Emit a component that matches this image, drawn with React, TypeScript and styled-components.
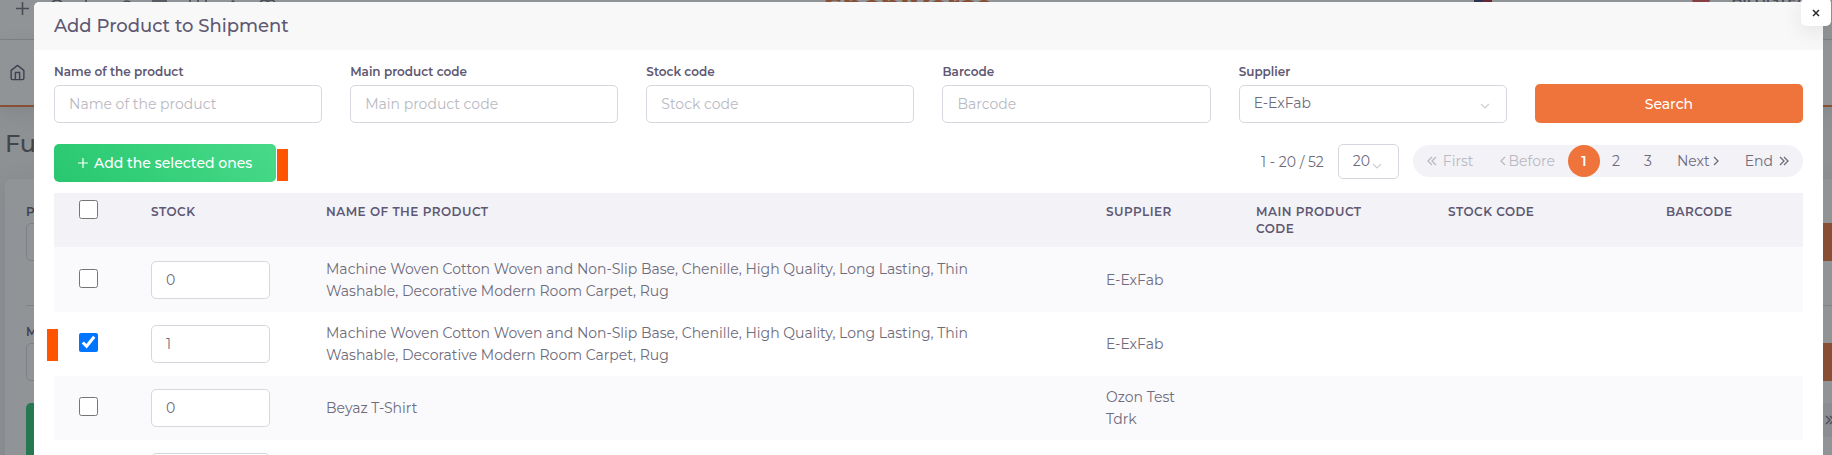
import React from "react";
import styled, { createGlobalStyle } from "styled-components";

const ink = "#5e5873";
const body = "#6e6b7b";
const muted = "#b9b9c3";
const line = "#d8d6de";
const orange = "#ee743b";

const GlobalStyle = createGlobalStyle`
  *, *::before, *::after { box-sizing: border-box; }
  body {
    margin: 0;
    background: #f8f8f8;
    color: ${body};
    font: 400 14px/22px Montserrat, Inter, sans-serif;
  }
  button, input, select { font: inherit; color: inherit; }
`;

/* ---------- page behind the dialog ---------- */

const Page = styled.div`
  height: 100vh;
  overflow: hidden;
`;

const TopBar = styled.header`
  display: flex;
  justify-content: space-between;
  align-items: flex-start;
  height: 40px;
  background: #fff;
  border-bottom: 1px solid #dcdcdc;
  overflow: hidden;
`;

const Brand = styled.span`
  margin: -8px 0 0 54px;
  font-size: 28px;
  line-height: 28px;
  font-weight: 800;
  color: ${orange};
`;

const UserArea = styled.div`
  display: flex;
  align-items: flex-start;
  padding-right: 24px;
`;

const Flag = styled.span`
  width: 18px;
  height: 2px;
  margin-right: 200px;
  background: linear-gradient(90deg, #3c3b6e 50%, #b22234 50%);
`;

const Badge = styled.span`
  width: 18px;
  height: 14px;
  margin: -8px 22px 0 0;
  border-radius: 0 0 7px 7px;
  background: #ea5455;
`;

const UserName = styled.span`
  margin-top: -8px;
  font-size: 14px;
  line-height: 16px;
  font-weight: 600;
`;

const MenuBar = styled.nav`
  display: flex;
  align-items: center;
  height: 67px;
  padding: 0 9px;
  background: #fff;
  border-bottom: 2px solid ${orange};
  box-shadow: 0 4px 20px rgba(0, 0, 0, 0.1);
`;

const PageTitle = styled.h1`
  margin: 22px 0 20px 5px;
  font-size: 24px;
  line-height: 30px;
  font-weight: 500;
  color: #636363;
`;

const Card = styled.section`
  height: 400px;
  margin: 0 -20px 0 5px;
  padding: 21px 0 0 21px;
  border-radius: 6px;
  background: #fff;
  box-shadow: 0 4px 24px rgba(34, 41, 47, 0.1);
`;

const CardRow = styled.div<{ $divided?: boolean }>`
  display: flex;
  align-items: flex-end;
  justify-content: space-between;
  height: ${(p) => (p.$divided ? "106px" : "61px")};
  padding-bottom: ${(p) => (p.$divided ? "44px" : "0")};
  margin-bottom: ${(p) => (p.$divided ? "14px" : "22px")};
  border-bottom: ${(p) => (p.$divided ? "1px solid #dcdce2" : "0")};
  font-size: 12px;
  font-weight: 600;
  color: ${ink};
`;

const Stub = styled.div`
  width: 200px;
  height: 38px;
  border: 1px solid ${line};
  border-radius: 5px;
`;

const StubButton = styled.div<{ $green?: boolean }>`
  width: ${(p) => (p.$green ? "200px" : "100px")};
  height: ${(p) => (p.$green ? "60px" : "38px")};
  border-radius: 5px;
  background: ${(p) => (p.$green ? "#28c76f" : orange)};
`;

const CardField = styled.div`
  line-height: 22px;
`;

const CardFooter = styled.div`
  display: flex;
  justify-content: space-between;
  color: ${body};
`;

const FooterPill = styled.div`
  display: flex;
  align-items: center;
  height: 34px;
  padding: 0 14px;
  margin-right: 3px;
  border-radius: 16px;
  background: #f3f2f7;
`;

/* ---------- dialog ---------- */

const Overlay = styled.div`
  position: fixed;
  inset: 0;
  overflow: hidden;
  background: rgba(34, 41, 47, 0.5);
`;

const Dialog = styled.div`
  position: relative;
  margin: 2px 9px 0 34px;
  border-radius: 6px 6px 0 0;
  background: #fff;
`;

const DialogHeader = styled.header`
  padding: 10px 20px;
  border-radius: 5px 5px 0 0;
  background: #f8f8f8;
`;

const DialogTitle = styled.h2`
  margin: 0;
  font-size: 18px;
  line-height: 28px;
  font-weight: 500;
  color: ${ink};
`;

const CloseButton = styled.button`
  position: absolute;
  top: -4px;
  right: -8px;
  display: grid;
  place-items: center;
  width: 30px;
  height: 28px;
  padding: 2px 0 0;
  border: 0;
  border-radius: 5px;
  background: #fff;
  box-shadow: 0 5px 20px rgba(34, 41, 47, 0.1);
`;

const DialogBody = styled.div`
  padding: 13px 20px;
`;

const Filters = styled.form`
  display: grid;
  grid-template-columns: repeat(6, 1fr);
  align-items: end;
  gap: 28px;
`;

const Field = styled.div`
  display: flex;
  flex-direction: column;
  gap: 4px;
`;

const Label = styled.label`
  font-size: 12px;
  line-height: 18px;
  font-weight: 600;
  color: ${ink};
`;

const TextInput = styled.input`
  width: 100%;
  height: 38px;
  padding: 0 14px;
  border: 1px solid ${line};
  border-radius: 5px;
  background: #fff;
  outline: 0;
  &::placeholder { color: ${muted}; opacity: 1; }
`;

const SelectBox = styled.div<{ $compact?: boolean }>`
  position: relative;
  width: ${(p) => (p.$compact ? "61px" : "100%")};
  svg {
    position: absolute;
    right: ${(p) => (p.$compact ? "17px" : "17px")};
    bottom: ${(p) => (p.$compact ? "10px" : "14px")};
    pointer-events: none;
  }
`;

const Select = styled.select<{ $compact?: boolean }>`
  display: block;
  appearance: none;
  width: 100%;
  height: ${(p) => (p.$compact ? "35px" : "38px")};
  padding: 0 14px 2px;
  border: 1px solid ${line};
  border-radius: 5px;
  background: #fff;
  outline: 0;
`;

const SearchButton = styled.button`
  height: 39px;
  border: 0;
  border-radius: 5px;
  background: ${orange};
  color: #fff;
  font-weight: 500;
`;

const Toolbar = styled.div`
  display: flex;
  align-items: flex-start;
  justify-content: space-between;
  margin: 21px 0 11px;
`;

const Actions = styled.div`
  display: flex;
  align-items: flex-end;
  gap: 1px;
`;

const AddButton = styled.button`
  display: flex;
  align-items: center;
  gap: 6px;
  height: 38px;
  padding: 0 24px;
  border: 0;
  border-radius: 5px;
  background: linear-gradient(47deg, #28c76f, #48da89);
  color: #fff;
  font-weight: 500;
`;

const Marker = styled.span`
  width: 11px;
  height: 32px;
  margin-bottom: 1px;
  background: #ff5500;
`;

const RowMarker = styled(Marker)`
  position: absolute;
  top: 17px;
  left: -7px;
`;

const Paging = styled.div`
  display: flex;
  align-items: center;
  gap: 14px;
`;

const Pages = styled.ul`
  display: flex;
  margin: 0 0 1px;
  padding: 0 1px;
  list-style: none;
  border-radius: 16px;
  background: #f3f2f7;
`;

const PageLink = styled.a<{ $state?: "active" | "disabled"; $wide?: boolean; $gap?: number }>`
  display: flex;
  align-items: center;
  justify-content: center;
  gap: ${(p) => p.$gap ?? 0}px;
  min-width: 32px;
  height: 32px;
  padding: 0 ${(p) => (p.$wide ? 13 : 0)}px;
  border-radius: 16px;
  text-decoration: none;
  color: ${(p) => (p.$state === "active" ? "#fff" : p.$state === "disabled" ? muted : body)};
  background: ${(p) => (p.$state === "active" ? orange : "transparent")};
  font-weight: ${(p) => (p.$state === "active" ? 600 : 400)};
`;

const Table = styled.table`
  width: 100%;
  table-layout: fixed;
  border-collapse: collapse;
`;

const Col = styled.col<{ $w?: number }>`
  width: ${(p) => (p.$w ? `${p.$w}px` : "auto")};
`;

const HeadCell = styled.th<{ $check?: boolean }>`
  height: 54px;
  padding: ${(p) => (p.$check ? "7px 25px 0" : "10px 28px 9px")};
  text-align: left;
  vertical-align: top;
  background: #f3f2f7;
  color: ${ink};
  font-size: 12px;
  line-height: 17px;
  font-weight: 600;
  letter-spacing: 0.04em;
`;

const Cell = styled.td<{ $check?: boolean; $name?: boolean }>`
  position: relative;
  height: 64px;
  padding: ${(p) => (p.$check ? "0 25px 4px" : p.$name ? "0 84px 0 28px" : "0 28px")};
`;

const Row = styled.tr`
  &:nth-child(odd) { background: #fafafc; }
  &:first-child ${Cell} { height: 65px; padding-top: 1px; }
`;

const Check = styled.input`
  display: block;
  width: 19px;
  height: 19px;
  margin: 0;
`;

const Chevron = () => (
  <svg width="10" height="6" viewBox="0 0 10 6" fill="none" stroke="#cfcdd6" strokeWidth="1.2">
    <path d="M1 1l4 4 4-4" />
  </svg>
);

const Arrow = ({ dir, double }: { dir: "left" | "right"; double?: boolean }) => {
  const w = double ? 10 : 6;
  const left = dir === "left";
  const d = left ? "M5 1L1 5l4 4" : "M1 1l4 4-4 4";
  const d2 = left ? "M9 1L5 5l4 4" : "M5 1l4 4-4 4";
  return (
    <svg width={w} height="10" viewBox={`0 0 ${w} 10`} fill="none" stroke="currentColor" strokeWidth="1.3">
      <path d={d} />
      {double && <path d={d2} />}
    </svg>
  );
};

const TopIcons = () => (
  <svg width="290" height="18" viewBox="0 0 290 18" fill="none" stroke={body} strokeWidth="1.6">
    <path d="M22.500 2v13M16 8.500h13" />
    <circle cx="57" cy="6" r="6" />
    <path d="M86 0v4M190 0v6M198 0v6M206 0v6M230 4l3-3 3 3M152 1h15" />
    <circle cx="127" cy="6" r="5" />
    <circle cx="264" cy="4" r="4" />
    <circle cx="271" cy="4" r="4" />
  </svg>
);

const HomeIcon = () => (
  <svg width="17" height="17" viewBox="0 0 24 24" fill="none" stroke={ink} strokeWidth="2" strokeLinejoin="round">
    <path d="M3 9l9-7 9 7v11a2 2 0 0 1-2 2H5a2 2 0 0 1-2-2z" />
    <path d="M9 22V12h6v10" />
  </svg>
);

const textFilters = ["Name of the product", "Main product code", "Stock code", "Barcode"];
const rug =
  "Machine Woven Cotton Woven and Non-Slip Base, Chenille, High Quality, Long Lasting, Thin Washable, Decorative Modern Room Carpet, Rug";
const products = [
  { name: rug, supplier: "E-ExFab", stock: 0, checked: false },
  { name: rug, supplier: "E-ExFab", stock: 1, checked: true },
  { name: "Beyaz T-Shirt", supplier: "Ozon Test Tdrk", stock: 0, checked: false },
  { name: "", supplier: "", stock: 0, checked: false },
];

export default function App() {
  return (
    <>
      <GlobalStyle />
      <Page aria-hidden="true">
        <TopBar>
          <TopIcons />
          <Brand>ShopiVerse</Brand>
          <UserArea>
            <Flag />
            <Badge />
            <UserName>BILGISTEN</UserName>
          </UserArea>
        </TopBar>
        <MenuBar>
          <HomeIcon />
        </MenuBar>
        <PageTitle>Fu</PageTitle>
        <Card>
          <CardRow $divided>
            <CardField>P<Stub /></CardField>
            <StubButton />
          </CardRow>
          <CardRow>
            <CardField>M<Stub /></CardField>
            <StubButton />
          </CardRow>
          <CardFooter>
            <StubButton $green />
            <FooterPill><Arrow dir="right" double /></FooterPill>
          </CardFooter>
        </Card>
      </Page>

      <Overlay>
        <Dialog role="dialog" aria-labelledby="dialog-title">
          <DialogHeader>
            <DialogTitle id="dialog-title">Add Product to Shipment</DialogTitle>
            <CloseButton type="button" aria-label="Close">
              <svg width="8" height="8" viewBox="0 0 8 8" stroke="#2b2b2b" strokeWidth="1.5">
                <path d="M1 1l6 6M7 1L1 7" />
              </svg>
            </CloseButton>
          </DialogHeader>
          <DialogBody>
            <Filters onSubmit={(e) => e.preventDefault()}>
              {textFilters.map((name, i) => (
                <Field key={name}>
                  <Label htmlFor={`filter-${i}`}>{name}</Label>
                  <TextInput id={`filter-${i}`} type="text" placeholder={name} />
                </Field>
              ))}
              <Field>
                <Label htmlFor="supplier">Supplier</Label>
                <SelectBox>
                  <Select id="supplier" defaultValue="E-ExFab">
                    <option>E-ExFab</option>
                  </Select>
                  <Chevron />
                </SelectBox>
              </Field>
              <SearchButton type="submit">Search</SearchButton>
            </Filters>

            <Toolbar>
              <Actions>
                <AddButton type="button">
                  <svg width="10" height="10" viewBox="0 0 10 10" stroke="#fff" strokeWidth="1.2">
                    <path d="M5 0v10M0 5h10" />
                  </svg>
                  Add the selected ones
                </AddButton>
                <Marker />
              </Actions>
              <Paging>
                <span>1 - 20 / 52</span>
                <SelectBox $compact>
                  <Select $compact aria-label="Rows per page" defaultValue="20">
                    <option>20</option>
                  </Select>
                  <Chevron />
                </SelectBox>
                <Pages>
                  <li><PageLink href="#first" $state="disabled" $wide $gap={6}><Arrow dir="left" double />First</PageLink></li>
                  <li><PageLink href="#before" $state="disabled" $wide $gap={3}><Arrow dir="left" />Before</PageLink></li>
                  <li><PageLink href="#1" $state="active" aria-current="page">1</PageLink></li>
                  <li><PageLink href="#2">2</PageLink></li>
                  <li><PageLink href="#3">3</PageLink></li>
                  <li><PageLink href="#next" $wide $gap={3}>Next<Arrow dir="right" /></PageLink></li>
                  <li><PageLink href="#end" $wide $gap={6}>End<Arrow dir="right" double /></PageLink></li>
                </Pages>
              </Paging>
            </Toolbar>

            <Table>
              <colgroup>
                <Col $w={69} />
                <Col $w={175} />
                <Col />
                <Col $w={150} />
                <Col $w={192} />
                <Col $w={218} />
                <Col $w={165} />
              </colgroup>
              <thead>
                <tr>
                  <HeadCell $check><Check type="checkbox" aria-label="Select all" /></HeadCell>
                  <HeadCell>STOCK</HeadCell>
                  <HeadCell>NAME OF THE PRODUCT</HeadCell>
                  <HeadCell>SUPPLIER</HeadCell>
                  <HeadCell>MAIN PRODUCT CODE</HeadCell>
                  <HeadCell>STOCK CODE</HeadCell>
                  <HeadCell>BARCODE</HeadCell>
                </tr>
              </thead>
              <tbody>
                {products.map((p, i) => (
                  <Row key={i}>
                    <Cell $check>
                      {p.checked && <RowMarker />}
                      <Check type="checkbox" defaultChecked={p.checked} aria-label={`Select row ${i + 1}`} />
                    </Cell>
                    <Cell><TextInput type="text" defaultValue={p.stock} aria-label="Stock" /></Cell>
                    <Cell $name>{p.name}</Cell>
                    <Cell>{p.supplier}</Cell>
                    <Cell />
                    <Cell />
                    <Cell />
                  </Row>
                ))}
              </tbody>
            </Table>
          </DialogBody>
        </Dialog>
      </Overlay>
    </>
  );
}
